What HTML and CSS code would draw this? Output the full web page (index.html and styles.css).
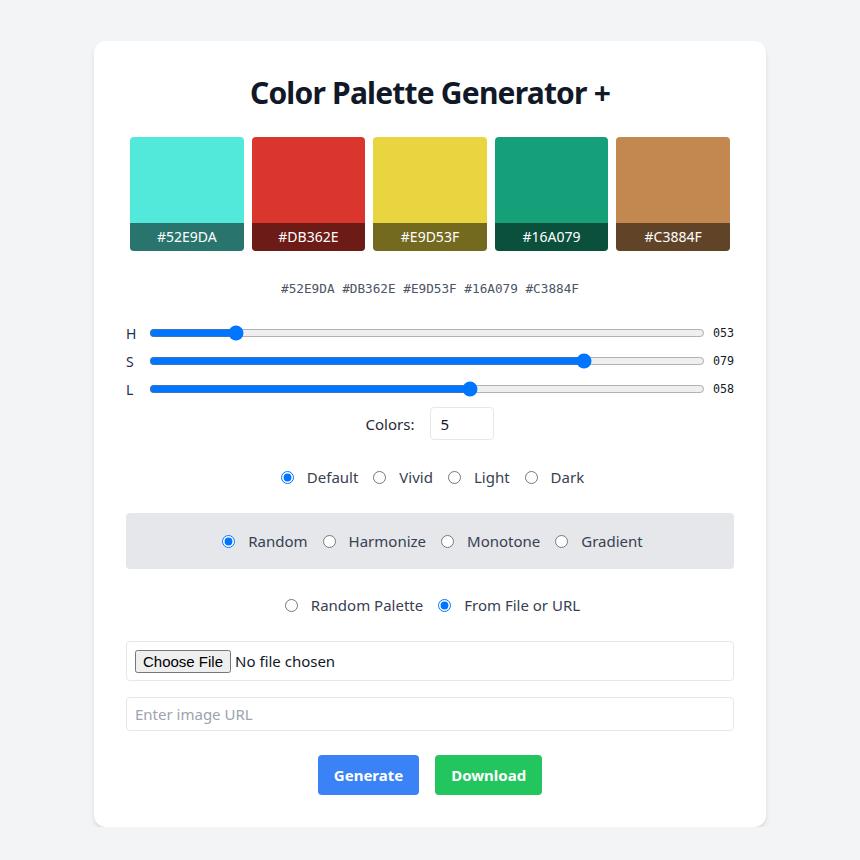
FILE: index.html
```html
<!DOCTYPE html>
<html lang="en">
<head>
<meta charset="utf-8">
<title>Color Palette Generator +</title>
<link rel="stylesheet" href="styles.css">
</head>
<body>
<main class="card">
  <h1 class="title">Color Palette Generator +</h1>
  <div class="palette">
    <div class="swatch" style="background:#52E9DA"><span class="swatch-label">#52E9DA</span></div>
    <div class="swatch" style="background:#DB362E"><span class="swatch-label">#DB362E</span></div>
    <div class="swatch" style="background:#E9D53F"><span class="swatch-label">#E9D53F</span></div>
    <div class="swatch" style="background:#16A079"><span class="swatch-label">#16A079</span></div>
    <div class="swatch" style="background:#C3884F"><span class="swatch-label">#C3884F</span></div>
  </div>
  <p class="hex-list">#52E9DA #DB362E #E9D53F #16A079 #C3884F</p>
  <div class="sliders">
    <div class="slider-row"><span class="slider-label">H</span><input class="range" type="range" min="0" max="360" value="53"><span class="slider-value">053</span></div>
    <div class="slider-row"><span class="slider-label">S</span><input class="range" type="range" min="0" max="100" value="79"><span class="slider-value">079</span></div>
    <div class="slider-row"><span class="slider-label">L</span><input class="range" type="range" min="0" max="100" value="58"><span class="slider-value">058</span></div>
  </div>
  <div class="count-row">
    <label class="count-label" for="count">Colors:</label>
    <input class="count-input" id="count" type="number" value="5">
  </div>
  <div class="radio-row">
    <label class="opt"><input type="radio" name="tone" checked> Default</label>
    <label class="opt"><input type="radio" name="tone"> Vivid</label>
    <label class="opt"><input type="radio" name="tone"> Light</label>
    <label class="opt"><input type="radio" name="tone"> Dark</label>
  </div>
  <div class="mode-box">
    <label class="opt"><input type="radio" name="mode" checked> Random</label>
    <label class="opt"><input type="radio" name="mode"> Harmonize</label>
    <label class="opt"><input type="radio" name="mode"> Monotone</label>
    <label class="opt"><input type="radio" name="mode"> Gradient</label>
  </div>
  <div class="radio-row source-row">
    <label class="opt"><input type="radio" name="src"> Random Palette</label>
    <label class="opt"><input type="radio" name="src" checked> From File or URL</label>
  </div>
  <div class="file-box"><input class="file-input" type="file"></div>
  <input class="url-input" type="text" placeholder="Enter image URL">
  <div class="actions">
    <button class="btn btn-blue" type="button">Generate</button>
    <button class="btn btn-green" type="button">Download</button>
  </div>
</main>
</body>
</html>
```
FILE: styles.css
```css
* { box-sizing: border-box; }
html, body { margin: 0; padding: 0; }
body {
  background: #f3f4f6;
  font-family: "Noto Sans", "Open Sans", sans-serif;
  color: #374151;
  padding-top: 41px;
}
.card {
  width: 672px;
  margin: 0 auto;
  background: #fff;
  border-radius: 12px;
  box-shadow: 0 4px 6px -1px rgba(0,0,0,0.1), 0 2px 4px -2px rgba(0,0,0,0.1);
  padding: 32px;
  display: flex;
  flex-direction: column;
}
.title {
  margin: 2px 0 22px;
  text-align: center;
  font-size: 30px;
  line-height: 36px;
  font-weight: 700;
  letter-spacing: -0.8px;
  color: #111827;
}
.palette { display: flex; }
.swatch {
  flex: 1;
  margin: 4px;
  height: 114px;
  border-radius: 4px;
  overflow: hidden;
  display: flex;
  flex-direction: column;
  justify-content: flex-end;
}
.swatch-label {
  background: rgba(0,0,0,0.5);
  color: #fff;
  height: 28px;
  line-height: 28px;
  text-align: center;
  font-size: 14px;
}
.hex-list {
  margin: 26px 0 0;
  text-align: center;
  font-family: "DejaVu Sans Mono", monospace;
  font-size: 12.7px;
  line-height: 16px;
  color: #4b5563;
}
.sliders {
  margin-top: 26px;
  display: flex;
  flex-direction: column;
  gap: 8px;
}
.slider-row {
  display: flex;
  align-items: center;
  height: 20px;
}
.slider-label {
  width: 23px;
  font-size: 14px;
  color: #1f2f4f;
}
.range {
  flex: 1;
  margin: 0;
  accent-color: #0075ff;
}
.slider-value {
  width: 29px;
  text-align: right;
  font-family: "DejaVu Sans Mono", monospace;
  font-size: 11.7px;
  color: #111827;
}
.count-row {
  margin-top: 8px;
  display: flex;
  justify-content: center;
  align-items: center;
  gap: 16px;
}
.count-label { font-size: 15px; color: #1f2937; }
.count-input {
  width: 64px;
  height: 33px;
  border: 1px solid #e5e7eb;
  border-radius: 4px;
  padding: 0 9px;
  font-family: inherit;
  font-size: 15px;
  color: #111827;
  -moz-appearance: textfield;
}
.count-input::-webkit-inner-spin-button { -webkit-appearance: none; }
.radio-row {
  margin-top: 25px;
  display: flex;
  justify-content: center;
  align-items: center;
  gap: 10px;
  font-size: 15px;
  line-height: 24px;
}
.opt { display: inline-flex; align-items: center; gap: 13px; color: #374151; }
.opt input { margin: 0 0 0 5px; accent-color: #0075ff; }
.mode-box {
  margin-top: 24px;
  background: #e5e7eb;
  border-radius: 4px;
  padding: 16px;
  display: flex;
  justify-content: center;
  align-items: center;
  gap: 10px;
  font-size: 15px;
  line-height: 24px;
}
.source-row { margin-top: 24px; }
.file-box {
  margin-top: 24px;
  height: 40px;
  border: 1px solid #e5e7eb;
  border-radius: 4px;
  padding: 4px 8px;
  display: flex;
  align-items: center;
}
.file-input { font-family: inherit; font-size: 15px; color: #111827; }
.url-input {
  margin-top: 16px;
  height: 34px;
  border: 1px solid #e5e7eb;
  border-radius: 4px;
  padding: 0 8px;
  font-family: inherit;
  font-size: 15px;
}
.url-input::placeholder { color: #9ca3af; }
.actions {
  margin-top: 24px;
  display: flex;
  justify-content: center;
  gap: 16px;
}
.btn {
  height: 40px;
  border: none;
  border-radius: 4px;
  padding: 0 16px;
  color: #fff;
  font-family: inherit;
  font-weight: 700;
  font-size: 15px;
}
.btn-blue { background: #3b82f6; }
.btn-green { background: #22c55e; }
```
